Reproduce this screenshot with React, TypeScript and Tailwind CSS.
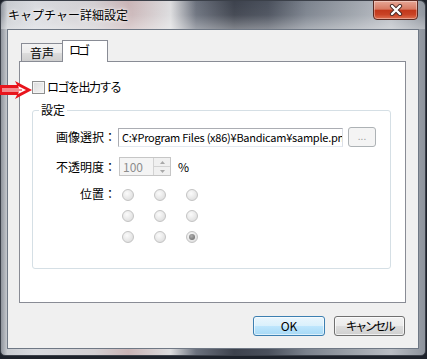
import React from "react";

const font = { fontFamily: '"Noto Sans CJK JP", "Noto Sans", sans-serif' };

function Radio({ checked }: { checked?: boolean }) {
  return (
    <div className="w-[12px] h-[12px] rounded-full border border-[#c3c3c3] bg-[radial-gradient(circle_at_40%_35%,#fbfbfb_0%,#e6e6e6_60%,#d6d6d6_100%)] flex items-center justify-center">
      {checked && (
        <div className="w-[6px] h-[6px] rounded-full bg-[radial-gradient(circle_at_40%_35%,#b0b0b0_0%,#7a7a7a_70%,#5f5f5f_100%)]" />
      )}
    </div>
  );
}

export default function App() {
  return (
    <div
      className="w-[427px] h-[359px] overflow-hidden relative bg-[#1d222b] text-[12px] leading-[16px] text-black"
      style={font}
    >
      {/* window */}
      <div className="w-[426px] h-[356px] flex flex-col border border-[#3b4049] rounded-t-[6px] rounded-b-[5px] bg-[linear-gradient(90deg,#8f949c_0%,#c9ccd1_1.5%,#d8dadf_8%,#d2cfd2_22%,#c9b4b6_30%,#dcdcde_40%,#6b717d_46%,#3d424d_55%,#4a505c_63%,#7b828d_72%,#9aa0a8_82%,#b9bdc4_92%,#8d939c_100%)]">
        {/* title bar */}
        <div className="h-[28px] relative bg-[linear-gradient(180deg,rgba(255,255,255,0)_0%,rgba(255,255,255,0.05)_50%,rgba(255,255,255,0.35)_100%)] rounded-t-[6px]">
          <div className="absolute left-[7px] top-[6px] text-[12px] leading-[16px] text-black [text-shadow:0_0_6px_#ffffff,0_0_3px_#ffffff]">
            キャプチャー詳細設定
          </div>
          {/* close button */}
          <div className="absolute right-[7px] top-[-1px] w-[45px] h-[20px] rounded-b-[4px] border border-[#5a2a22] bg-[linear-gradient(180deg,#e6a796_0%,#d77a63_45%,#c2381b_52%,#c94325_75%,#de7152_100%)] flex items-center justify-center shadow-[inset_0_0_0_1px_rgba(255,255,255,0.35)]">
            <svg width="14" height="12" viewBox="0 0 14 12">
              <path d="M3 2 L11 10 M11 2 L3 10" stroke="#4a2a26" strokeWidth="4.2" strokeLinecap="round" />
              <path d="M3 2 L11 10 M11 2 L3 10" stroke="#ffffff" strokeWidth="2.4" strokeLinecap="round" />
            </svg>
          </div>
        </div>

        {/* client area */}
        <div className="ml-[6px] w-[412px] h-[320px] border border-[#6f7885] bg-[#f0f0f0] flex flex-col">
          <div className="pt-[11px] pl-[11px] pr-[12px]">
            {/* tabs */}
            <div className="flex items-end h-[20px] pl-[2px]">
              <div className="w-[42px] h-[18px] border border-b-0 border-[#898c95] bg-[linear-gradient(180deg,#f3f3f3_0%,#ebebeb_50%,#dddddd_51%,#cfcfcf_100%)] flex items-center justify-center">
                音声
              </div>
              <div className="-ml-[1px] w-[46px] h-[22px] -mb-[1px] relative z-10 border border-b-0 border-[#898c95] bg-white pl-[6px] pt-[1px] tracking-[-3px]">
                ロゴ
              </div>
            </div>
            {/* panel */}
            <div className="h-[242px] border border-[#898c95] bg-white pt-[18px]">
              <div className="flex items-center h-[14px] pl-[12px]">
                <div className="w-[13px] h-[13px] border border-[#8e8f8f] bg-[linear-gradient(135deg,#dcdcdc_0%,#f5f5f5_100%)] shadow-[inset_0_0_0_1px_#f4f4f4]" />
                <span className="ml-[2px] tracking-[-1.5px]">ロゴを出力する</span>
              </div>
              <fieldset className="ml-[12px] mt-[8px] w-[359px] h-[167px] border border-[#d5dfe5] rounded-[3px] pb-[18px]">
                <legend className="ml-[6px] px-[2px]">設定</legend>
                <div className="grid grid-cols-[83px_1fr] gap-x-[2px] pt-[8px]">
                  <div className="h-[21px] flex items-center justify-end">画像選択：</div>
                  <div className="h-[21px] flex items-center">
                    <div className="w-[225px] h-[19px] mt-[2px] border border-[#abadb3] border-b-[#e3e9ef] border-r-[#dbdfe6] bg-white pl-[3px] overflow-hidden">
                      <div className="w-[240px] text-[11px] leading-[17px] tracking-[-0.25px] whitespace-nowrap">
                        C:¥Program Files (x86)¥Bandicam¥sample.png
                      </div>
                    </div>
                    <div className="ml-[5px] w-[28px] h-[20px] border border-[#adb2b5] rounded-[3px] bg-[#f4f4f4] text-[#a0a0a0] flex items-center justify-center text-[10px] leading-[10px] pb-[2px]">
                      ...
                    </div>
                  </div>

                  <div className="mt-[10px] h-[19px] flex items-center justify-end">不透明度：</div>
                  <div className="mt-[10px] h-[19px] flex items-center">
                    <div className="ml-[1px] w-[52px] h-[19px] border border-[#c6c6c6] bg-[#f4f4f4] flex">
                      <div className="flex-1 pl-[3px] text-[#8d8d8d] leading-[17px]">100</div>
                      <div className="w-[17px] flex flex-col border-l border-[#d3d3d3]">
                        <div className="flex-1 flex items-center justify-center border-b border-[#d3d3d3] bg-[#f0f0f0]">
                          <svg width="5" height="3" viewBox="0 0 5 3"><path d="M0 3 L2.5 0 L5 3 Z" fill="#a8a8a8" /></svg>
                        </div>
                        <div className="flex-1 flex items-center justify-center bg-[#f0f0f0]">
                          <svg width="5" height="3" viewBox="0 0 5 3"><path d="M0 0 L2.5 3 L5 0 Z" fill="#a8a8a8" /></svg>
                        </div>
                      </div>
                    </div>
                    <span className="ml-[7px]">%</span>
                  </div>

                  <div className="mt-[12px] h-[12px] flex items-center justify-end">位置：</div>
                  <div className="mt-[13px] pl-[4px] grid grid-cols-[12px_12px_12px] gap-x-[20px] gap-y-[9px] w-fit">
                    <Radio />
                    <Radio />
                    <Radio />
                    <Radio />
                    <Radio />
                    <Radio />
                    <Radio />
                    <Radio />
                    <Radio checked />
                  </div>
                </div>
              </fieldset>
            </div>
          </div>
          {/* buttons */}
          <div className="mt-[13px] flex justify-end gap-[9px] pr-[13px]">
            <div className="w-[72px] h-[20px] rounded-[3px] border border-[#3c7fb1] bg-[linear-gradient(180deg,#eaf6fd_0%,#d9f0fc_50%,#bee6fd_51%,#a7d9f5_100%)] shadow-[inset_0_0_0_1px_rgba(255,255,255,0.6)] flex items-center justify-center">
              OK
            </div>
            <div className="w-[71px] h-[20px] rounded-[3px] border border-[#707070] bg-[linear-gradient(180deg,#f2f2f2_0%,#ebebeb_50%,#dddddd_51%,#cfcfcf_100%)] shadow-[inset_0_0_0_1px_rgba(255,255,255,0.7)] flex items-center justify-center tracking-[-2.5px]">
              キャンセル
            </div>
          </div>
        </div>
      </div>

      {/* red annotation arrow */}
      <svg className="absolute left-0 top-[80px]" width="33" height="20" viewBox="0 0 33 20">
        <path d="M0 5 L17 5 L15 1 L32 10 L15 19 L17 15 L0 15 Z" fill="#e8141c" />
        <path d="M2 8.5 L19 8.5 L18 6 L26 10 L18 14 L19 11.5 L2 11.5 Z" fill="#ffffff" />
        <path d="M2 10 L22 10" stroke="#e8141c" strokeWidth="1" />
      </svg>
    </div>
  );
}
